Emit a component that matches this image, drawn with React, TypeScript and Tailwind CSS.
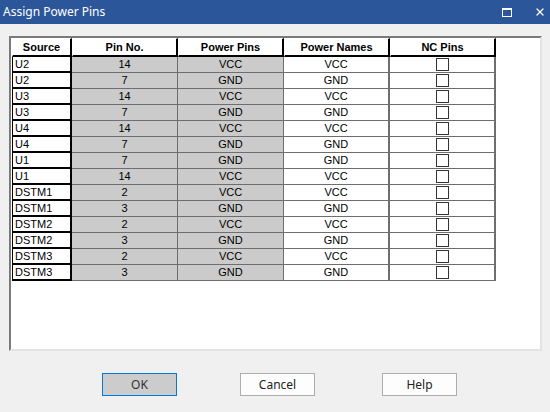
import { X } from 'lucide-react';

type Row = { source: string; pin: string; power: string; name: string };

const rows: Row[] = [
    { source: 'U2', pin: '14', power: 'VCC', name: 'VCC' },
    { source: 'U2', pin: '7', power: 'GND', name: 'GND' },
    { source: 'U3', pin: '14', power: 'VCC', name: 'VCC' },
    { source: 'U3', pin: '7', power: 'GND', name: 'GND' },
    { source: 'U4', pin: '14', power: 'VCC', name: 'VCC' },
    { source: 'U4', pin: '7', power: 'GND', name: 'GND' },
    { source: 'U1', pin: '7', power: 'GND', name: 'GND' },
    { source: 'U1', pin: '14', power: 'VCC', name: 'VCC' },
    { source: 'DSTM1', pin: '2', power: 'VCC', name: 'VCC' },
    { source: 'DSTM1', pin: '3', power: 'GND', name: 'GND' },
    { source: 'DSTM2', pin: '2', power: 'VCC', name: 'VCC' },
    { source: 'DSTM2', pin: '3', power: 'GND', name: 'GND' },
    { source: 'DSTM3', pin: '2', power: 'VCC', name: 'VCC' },
    { source: 'DSTM3', pin: '3', power: 'GND', name: 'GND' },
];

const headers = [
    { label: 'Source', w: 'w-[60px]' },
    { label: 'Pin No.', w: 'w-[106px]' },
    { label: 'Power Pins', w: 'w-[106px]' },
    { label: 'Power Names', w: 'w-[106px]' },
    { label: 'NC Pins', w: 'w-[106px]' },
];

export default function App() {
    return (
        <div className="w-[550px] h-[412px] bg-[#f0f0f0] flex flex-col overflow-hidden font-['Liberation_Sans',Arial,sans-serif] text-[11px] text-black">
            {/* Title bar */}
            <div className="h-[24px] shrink-0 bg-[#2b579a] flex items-center justify-between pl-[3px] pr-[4px]">
                <span className="text-white text-[12px] font-['Noto_Sans',sans-serif]">Assign Power Pins</span>
                <div className="flex items-center gap-[22px]">
                    <div className="w-[10px] h-[9px] border border-white border-t-2" />
                    <X className="w-[12px] h-[12px] text-white" strokeWidth={2.5} />
                </div>
            </div>

            {/* Grid panel */}
            <div className="pl-[9px] pt-[12px]">
                <div className="w-[533px] h-[315px] bg-white border-l-2 border-t-2 border-[#7a7a7a] border-r-2 border-b-2 border-r-[#e3e3e3] border-b-[#e3e3e3] pl-px">
                    {/* Header */}
                    <div className="flex h-[19px]">
                        {headers.map((h) => (
                            <div
                                key={h.label}
                                className={`${h.w} h-full bg-white border-t border-l border-white border-r-2 border-b-2 border-r-black border-b-black flex items-center justify-center font-bold`}
                            >
                                {h.label}
                            </div>
                        ))}
                    </div>
                    {/* Rows */}
                    {rows.map((r, i) => (
                        <div key={i} className="flex h-[16px]">
                            <div className="w-[60px] h-full bg-white border-l border-black border-r-2 border-b-2 flex items-center pl-[2px]">
                                {r.source}
                            </div>
                            <div className="w-[106px] h-full bg-[#cbcbcb] border-r border-b border-[#6e6e6e] flex items-center justify-center">
                                {r.pin}
                            </div>
                            <div className="w-[106px] h-full bg-[#cbcbcb] border-r border-b border-[#6e6e6e] flex items-center justify-center">
                                {r.power}
                            </div>
                            <div className="w-[106px] h-full bg-white border-r-2 border-b border-[#6e6e6e] flex items-center justify-center">
                                {r.name}
                            </div>
                            <div className="w-[106px] h-full bg-white border-r-2 border-b border-[#6e6e6e] flex items-center justify-center">
                                <div className="w-[13px] h-[13px] border border-[#333333] bg-white" />
                            </div>
                        </div>
                    ))}
                </div>
            </div>

            {/* Buttons */}
            <div className="flex pt-[22px] pl-[102px] gap-[63px]">
                <button className="w-[75px] h-[23px] bg-[#cccccc] border border-[#0078d7] text-[12px] text-[#333] font-['Noto_Sans',sans-serif]">
                    OK
                </button>
                <button className="w-[75px] h-[23px] bg-[#fdfdfd] border border-[#adadad] text-[12px] text-[#222] font-['Noto_Sans',sans-serif]">
                    Cancel
                </button>
                <button className="w-[75px] h-[23px] bg-[#fdfdfd] border border-[#adadad] text-[12px] text-[#222] font-['Noto_Sans',sans-serif] ml-[4px]">
                    Help
                </button>
            </div>
        </div>
    );
}
